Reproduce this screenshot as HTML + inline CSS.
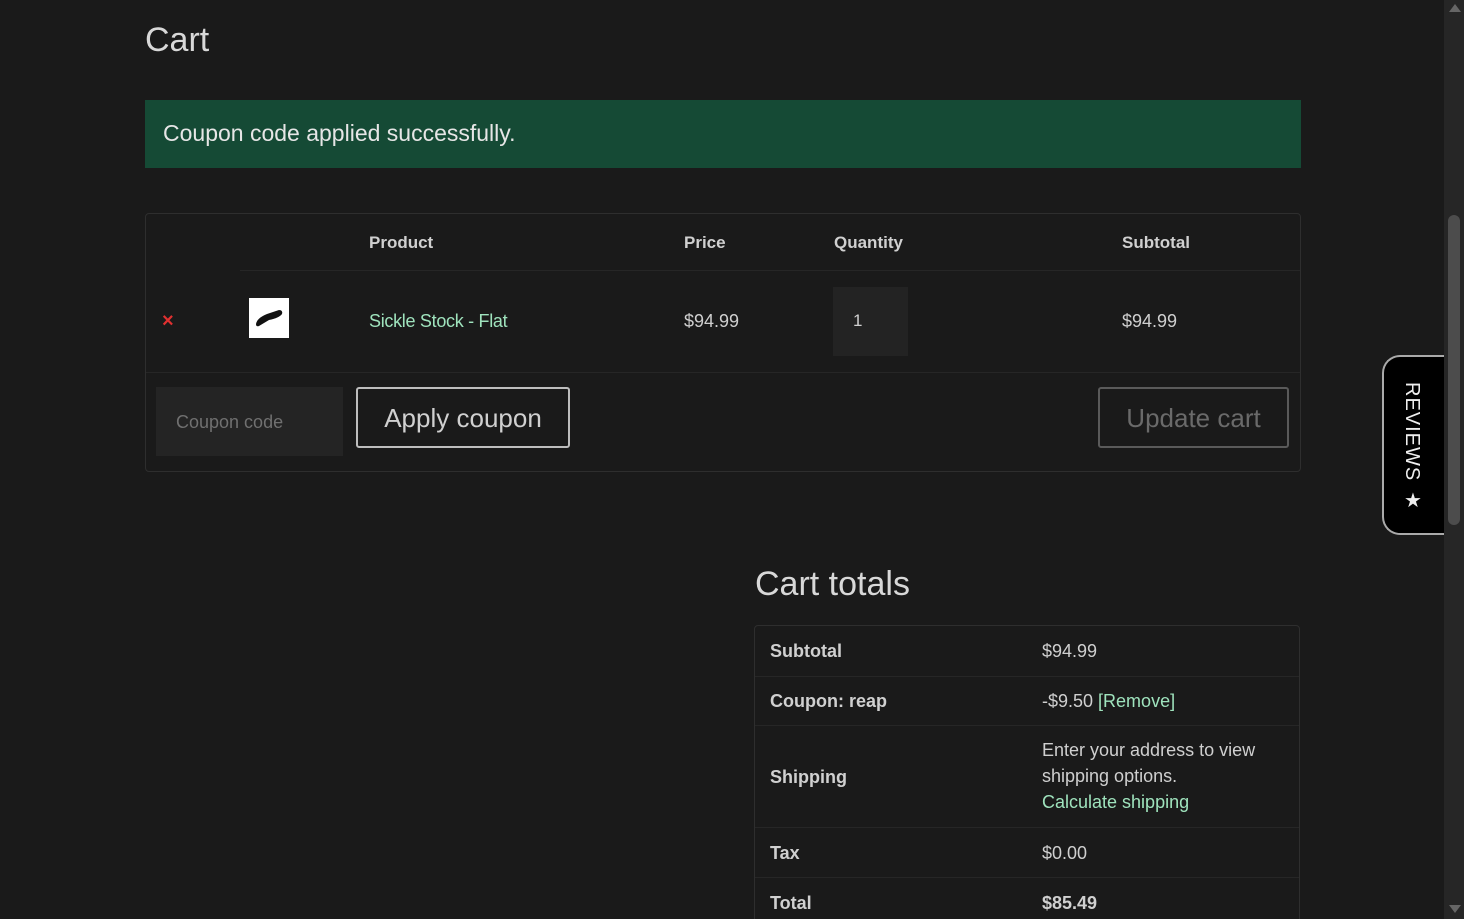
<!DOCTYPE html>
<html><head><meta charset="utf-8"><style>
*{margin:0;padding:0;box-sizing:border-box}
html,body{width:1464px;height:919px;overflow:hidden}
body{background:#1a1a1a;font-family:"Liberation Sans",sans-serif;color:#cfcfcf;position:relative}
.a{position:absolute;white-space:nowrap}
.b{font-weight:bold;color:#d0d0d0}
.g{color:#9fe3bd}
.line{position:absolute;height:1px;background:#262626}
</style></head><body>
<div class="a" style="left:145px;top:21px;font-size:34px;color:#d8d8d8">Cart</div>
<div class="a" style="left:145px;top:100px;width:1156px;height:68px;background:#154a35"></div>
<div class="a" style="left:163px;top:120px;font-size:23px;color:#e6e6e6">Coupon code applied successfully.</div>

<div class="a" style="left:145px;top:213px;width:1156px;height:259px;border:1px solid #2e2e2e;border-radius:4px"></div>
<div class="a b" style="left:369px;top:233px;font-size:17px">Product</div>
<div class="a b" style="left:684px;top:233px;font-size:17px">Price</div>
<div class="a b" style="left:834px;top:233px;font-size:17px">Quantity</div>
<div class="a b" style="left:1122px;top:233px;font-size:17px">Subtotal</div>
<div class="line" style="left:240px;top:270px;width:1060px"></div>
<div class="a" style="left:162px;top:310px;font-size:20px;font-weight:bold;color:#e03030">×</div>
<div class="a" style="left:249px;top:298px;width:40px;height:40px;background:#fff">
<svg width="40" height="40"><path d="M7 26 Q8 20 18 16 L30 12 Q34 12 33 16 Q30 20 20 22 L10 28 Q7 29 7 26Z" fill="#111"/></svg></div>
<div class="a g" style="left:369px;top:311px;font-size:18px;letter-spacing:-0.3px">Sickle Stock - Flat</div>
<div class="a" style="left:684px;top:311px;font-size:18px">$94.99</div>
<div class="a" style="left:833px;top:287px;width:75px;height:69px;background:#232323"></div>
<div class="a" style="left:853px;top:311px;font-size:17px">1</div>
<div class="a" style="left:1122px;top:311px;font-size:18px">$94.99</div>
<div class="line" style="left:146px;top:372px;width:1154px"></div>
<div class="a" style="left:156px;top:387px;width:187px;height:69px;background:#242424"></div>
<div class="a" style="left:176px;top:412px;font-size:18px;color:#707070">Coupon code</div>
<div class="a" style="left:356px;top:387px;width:214px;height:61px;border:2px solid #bdbdbd;border-radius:3px;font-size:26px;color:#d0d0d0;text-align:center;line-height:58px">Apply coupon</div>
<div class="a" style="left:1098px;top:387px;width:191px;height:61px;border:2px solid #5a5a5a;border-radius:3px;font-size:26px;color:#6a6a6a;text-align:center;line-height:58px">Update cart</div>

<div class="a" style="left:755px;top:565px;font-size:34px;color:#d8d8d8">Cart totals</div>
<div class="a" style="left:754px;top:625px;width:546px;height:300px;border:1px solid #2e2e2e;border-radius:4px"></div>
<div class="a b" style="left:770px;top:641px;font-size:18px">Subtotal</div>
<div class="a" style="left:1042px;top:641px;font-size:18px">$94.99</div>
<div class="line" style="left:755px;top:676px;width:544px"></div>
<div class="a b" style="left:770px;top:691px;font-size:18px">Coupon: reap</div>
<div class="a" style="left:1042px;top:691px;font-size:18px">-$9.50 <span class="g">[Remove]</span></div>
<div class="line" style="left:755px;top:725px;width:544px"></div>
<div class="a b" style="left:770px;top:767px;font-size:18px">Shipping</div>
<div class="a" style="left:1042px;top:737px;font-size:18px;line-height:26px">Enter your address to view<br>shipping options.<br><span class="g">Calculate shipping</span></div>
<div class="line" style="left:755px;top:827px;width:544px"></div>
<div class="a b" style="left:770px;top:843px;font-size:18px">Tax</div>
<div class="a" style="left:1042px;top:843px;font-size:18px">$0.00</div>
<div class="line" style="left:755px;top:877px;width:544px"></div>
<div class="a b" style="left:770px;top:893px;font-size:18px">Total</div>
<div class="a b" style="left:1042px;top:893px;font-size:18px">$85.49</div>

<div class="a" style="left:1382px;top:355px;width:64px;height:180px;background:#000;border:2px solid #aaa;border-right:none;border-radius:18px 0 0 18px"></div>
<div class="a" style="left:1400px;top:382px;font-size:20px;color:#eee;writing-mode:vertical-rl;letter-spacing:1px">REVIEWS ★</div>

<div class="a" style="left:1444px;top:0;width:20px;height:919px;background:#262626"></div>
<div class="a" style="left:1448px;top:215px;width:12px;height:310px;background:#4c4c4c;border-radius:6px"></div>
<div class="a" style="left:1449px;top:4px;width:0;height:0;border-left:6px solid transparent;border-right:6px solid transparent;border-bottom:8px solid #666"></div>
<div class="a" style="left:1449px;top:905px;width:0;height:0;border-left:6px solid transparent;border-right:6px solid transparent;border-top:8px solid #666"></div>
</body></html>
